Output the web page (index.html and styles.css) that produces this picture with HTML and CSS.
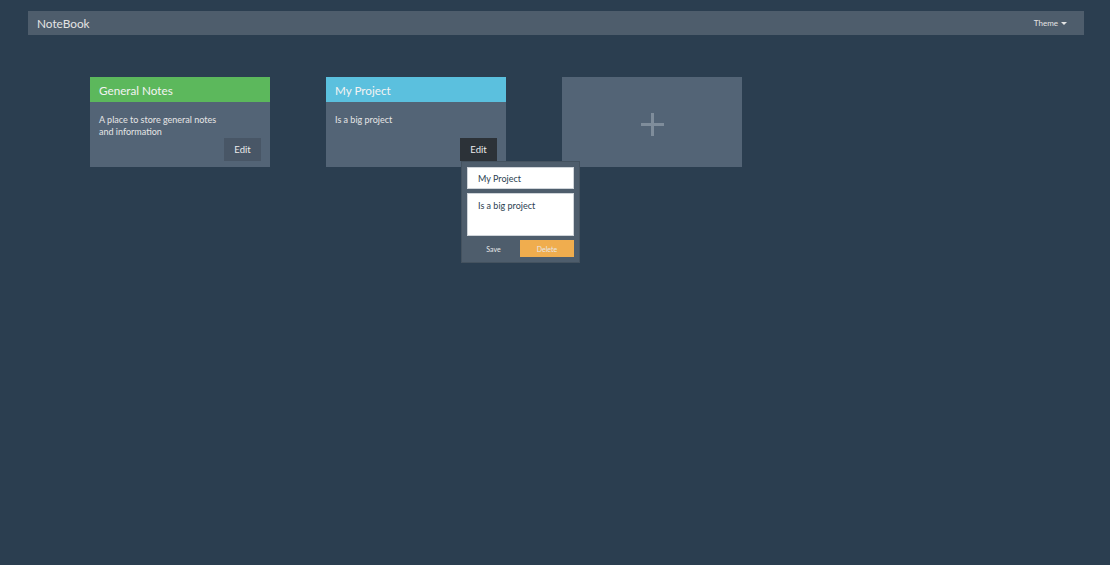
FILE: index.html
```html
<!DOCTYPE html>
<html lang="en">
<head>
  <meta charset="UTF-8" />
  <title>NoteBook</title>
  <link rel="stylesheet" href="styles.css">
</head>
<body>
  <nav class="navbar">
    <span class="brand">NoteBook</span>
    <span class="theme">Theme <span class="caret"></span></span>
  </nav>

  <div class="boards">
    <div class="card">
      <div class="card-title green">General Notes</div>
      <div class="card-body">
        <p>A place to store general notes<br>and information</p>
        <button class="btn-edit">Edit</button>
      </div>
    </div>

    <div class="card">
      <div class="card-title blue">My Project</div>
      <div class="card-body">
        <p>Is a big project</p>
        <button class="btn-edit active">Edit</button>
      </div>
      <!-- caja de edicion -->
      <div class="edit-box">
        <input class="field" value="My Project" />
        <textarea class="field area">Is a big project</textarea>
        <div class="actions">
          <button class="btn-save">Save</button>
          <button class="btn-delete">Delete</button>
        </div>
      </div>
    </div>

    <div class="card add">
      <span class="plus"></span>
    </div>
  </div>
</body>
</html>
```

FILE: styles.css
```css
html {
  background: #2b3e50;
}
body {
  margin: 0;
  min-height: 100vh;
  box-sizing: border-box;
  padding: 11px 26px 0 28px;
  background: #2b3e50;
  font-family: Lato, "Open Sans", sans-serif;
  color: #ebebeb;
}
.navbar {
  height: 24px;
  background: #4e5d6c;
  display: flex;
  align-items: center;
  justify-content: space-between;
  padding: 0 17px 0 9px;
}
.brand {
  font-size: 11.8px;
  color: #e4e4e4;
}
.theme {
  font-size: 8px;
  color: #e4e4e4;
  display: flex;
  align-items: center;
  gap: 3px;
}
.caret {
  width: 0;
  height: 0;
  border-left: 3px solid transparent;
  border-right: 3px solid transparent;
  border-top: 3px solid #e4e4e4;
}
.boards {
  display: flex;
  gap: 56px;
  padding: 42px 0 0 62px;
}
.card {
  width: 180px;
  height: 90px;
  background: #536476;
  position: relative;
}
.card-title {
  height: 25px;
  line-height: 27px;
  padding: 0 9px;
  font-size: 11.7px;
  color: #f3f3f3;
}
.green { background: #5cb85c; }
.blue { background: #5bc0de; }
.card-body {
  height: 65px;
  box-sizing: border-box;
  padding: 12px 9px 6px;
  display: flex;
  flex-direction: column;
}
.card-body p {
  margin: 0;
  font-size: 9px;
  line-height: 12px;
  color: #e6e6e6;
  flex: 1;
}
.btn-edit {
  align-self: flex-end;
  width: 37px;
  height: 23px;
  border: none;
  background: #485666;
  color: #ebebeb;
  font-family: inherit;
  font-size: 9.5px;
  padding: 0;
}
.btn-edit.active {
  background: #2c3238;
}
.edit-box {
  position: absolute;
  left: 135px;
  top: 84px;
  width: 107px;
  height: 90px;
  padding: 5px;
  background: #4e5d6c;
  border: 1px solid #44525f;
  display: flex;
  flex-direction: column;
  gap: 4px;
  z-index: 5;
}
.field {
  display: block;
  box-sizing: border-box;
  width: 107px;
  height: 22px;
  border: 1px solid #cfd4d9;
  background: #fff;
  font-family: inherit;
  font-size: 9px;
  color: #2b3e50;
  padding: 0 10px;
  margin: 0;
  outline: none;
}
.field.area {
  height: 43px;
  padding: 6px 10px;
  resize: none;
}
.actions {
  display: flex;
  height: 17px;
}
.actions button {
  border: none;
  font-family: inherit;
  font-size: 7px;
  color: #e8e8e8;
  padding: 0;
}
.btn-save {
  width: 53px;
  background: transparent;
}
.btn-delete {
  width: 54px;
  background: #f0ad4e;
  color: #fbe9d0;
}
.card.add {
  display: flex;
  align-items: center;
  justify-content: center;
}
.plus {
  width: 23px;
  height: 23px;
  margin-top: 4px;
  position: relative;
}
.plus::before,
.plus::after {
  content: "";
  position: absolute;
  background: #7f8d9b;
}
.plus::before {
  left: 0;
  top: 10px;
  width: 23px;
  height: 3px;
}
.plus::after {
  left: 10px;
  top: 0;
  width: 3px;
  height: 23px;
}
```
